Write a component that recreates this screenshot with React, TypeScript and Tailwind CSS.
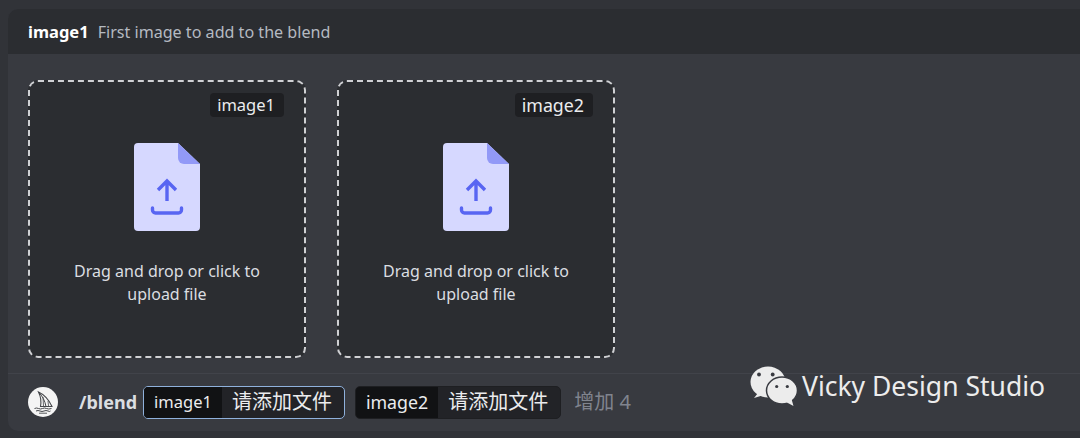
function FileIcon() {
  return (
    <svg width="66" height="88" viewBox="0 0 66 88" className="shrink-0">
      <path d="M4 0H44L66 21V84a4 4 0 0 1-4 4H4a4 4 0 0 1-4-4V4a4 4 0 0 1 4-4Z" fill="#d6d8ff" />
      <path d="M44 0L66 21H50a6 6 0 0 1-6-6Z" fill="#9299f7" />
      <path d="M33 58V38M24 47L33 38L42 47" fill="none" stroke="#5865f2" strokeWidth="3.4" />
      <path d="M18.500 65V67a3 3 0 0 0 3 3H44.500a3 3 0 0 0 3-3V65" fill="none" stroke="#5865f2" strokeWidth="3.4" strokeLinecap="round" />
    </svg>
  );
}

function UploadBox({ label, tagClass }: { label: string; tagClass: string }) {
  return (
    <div className="relative flex h-[278px] w-[278px] shrink-0 flex-col items-center rounded-[10px] border-2 border-dashed border-[#d0d1d4] bg-[#2b2d31] pt-[61px]">
      <span className={`absolute right-[20px] top-[11px] rounded-[4px] bg-[#1e1f22] pl-[7px] pr-[9px] leading-[24px] text-[#ebecee] ${tagClass}`}>
        {label}
      </span>
      <FileIcon />
      <p className="mt-[29px] w-[200px] text-center text-[16px] leading-[23px] text-[#dbdee1]">
        Drag and drop or click to upload file
      </p>
    </div>
  );
}

function Option({ name, nameClass, focused }: { name: string; nameClass: string; focused?: boolean }) {
  return (
    <div
      className={`flex h-[33px] items-stretch overflow-hidden rounded-[5px] border ${
        focused ? "border-[#8fb1dc]" : "border-[#1e1f22]"
      } bg-[#222327] text-[20px] leading-[30px] text-[#ebecee]`}
    >
      <span className={`flex items-center bg-[#111214] px-[10px] ${nameClass}`}>{name}</span>
      <span className="flex items-center pl-[10px] pr-[12px]">请添加文件</span>
    </div>
  );
}

export default function App() {
  return (
    <div
      className="h-[438px] w-[1080px] overflow-hidden bg-[#313338] pl-2 pt-[9px]"
      style={{ fontFamily: '"Noto Sans", "Noto Sans CJK SC", sans-serif' }}
    >
      <div className="relative flex h-[422px] flex-col overflow-hidden rounded-l-[10px] bg-[#383a40]">
        <div className="flex h-[45px] shrink-0 items-center gap-[9px] bg-[#2b2d31] pl-5 pt-[1px]">
          <span className="text-[16.5px] font-bold text-white">image1</span>
          <span className="text-[16.1px] text-[#b5bac1]">First image to add to the blend</span>
        </div>
        <div className="flex h-[320px] shrink-0 gap-[31px] border-b border-[#41434a] pl-5 pt-[26px]">
          <UploadBox label="image1" tagClass="text-[16.5px]" />
          <UploadBox label="image2" tagClass="text-[17.8px]" />
        </div>
        <div className="flex flex-1 items-center pb-[1px] pl-5">
          <svg width="30" height="30" viewBox="0 0 30 30" className="shrink-0">
            <circle cx="15" cy="15" r="15" fill="#f4f4f4" />
            <path d="M10.500 5C17 8 21 13 24 19.500H12.500C13.500 14 12.500 9 10.500 5Z" fill="none" stroke="#45474b" strokeWidth="1.1" />
            <path d="M10.500 5C14.500 9 17 14 18 19.500" fill="none" stroke="#45474b" strokeWidth="1" />
            <path d="M15 10L15.500 19M20 14L20.500 19" stroke="#45474b" strokeWidth="0.8" />
            <path d="M6.500 21.500Q8.500 20.500 10.500 21.500T14.500 21.500T18.500 21.500T23.500 21.500" fill="none" stroke="#45474b" strokeWidth="1" />
            <path d="M8 24Q10 23 12 24T16 24T20 24T22.500 24" fill="none" stroke="#45474b" strokeWidth="1" />
            <path d="M11 26.200H19" stroke="#45474b" strokeWidth="0.9" />
          </svg>
          <span className="ml-[21px] text-[18px] font-bold text-[#dbdee1]">/blend</span>
          <div className="ml-[6px]">
            <Option name="image1" nameClass="text-[16.5px]" focused />
          </div>
          <div className="ml-[10px]">
            <Option name="image2" nameClass="text-[17.8px]" />
          </div>
          <span className="ml-[13px] text-[20px] text-[#80848e]">增加 4</span>
        </div>
        <div className="absolute left-[742px] top-[357px] flex h-[41px] items-center text-[#ececec]">
          <svg width="48" height="41" viewBox="0 0 48 41" className="shrink-0">
            <ellipse cx="18" cy="16" rx="17.500" ry="15.500" fill="#ececec" />
            <path d="M8 27L4 32L14 29Z" fill="#ececec" />
            <ellipse cx="32" cy="24.500" rx="15.500" ry="13.500" fill="#ececec" stroke="#383a40" strokeWidth="1.500" />
            <path d="M36 36L43.500 40L41.500 33Z" fill="#ececec" />
            <circle cx="9" cy="8.500" r="1.900" fill="#383a40" />
            <circle cx="22.700" cy="8.500" r="1.900" fill="#383a40" />
            <circle cx="26.700" cy="20.500" r="1.600" fill="#383a40" />
            <circle cx="37.300" cy="20.500" r="1.600" fill="#383a40" />
          </svg>
          <span className="mb-[2px] ml-[4px] text-[26.5px] leading-[38px]">Vicky Design Studio</span>
        </div>
      </div>
    </div>
  );
}
